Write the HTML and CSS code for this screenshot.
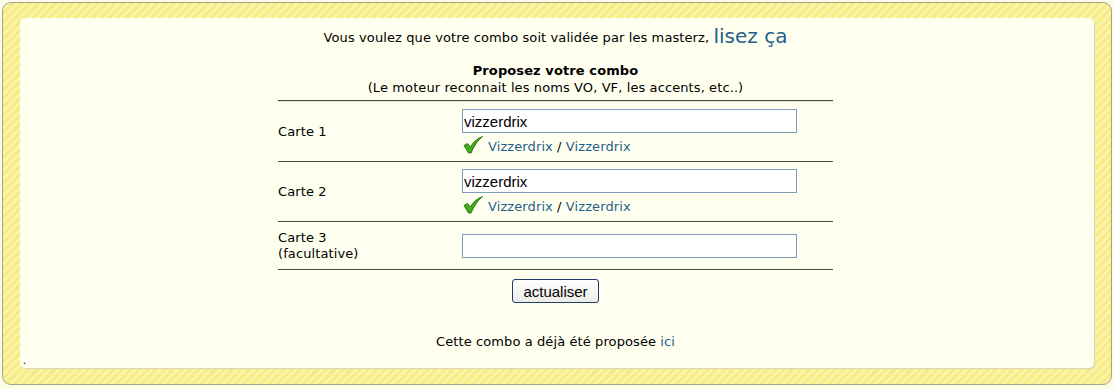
FILE: index.html
```html
<!DOCTYPE html>
<html lang="fr">
<head>
    <meta charset="UTF-8">
    <title>Proposer une combo</title>
    <link rel="stylesheet" href="styles.css">
</head>
<body>
    <div class="frame">
        <div class="box">
            <p class="intro">Vous voulez que votre combo soit validée par les masterz, <a href="#" class="big-link">lisez ça</a></p>

            <div class="form-head">
                <strong>Proposez votre combo</strong><br>
                (Le moteur reconnait les noms VO, VF, les accents, etc..)
            </div>

            <div class="cards">
                <div class="row">
                    <div class="label">Carte 1</div>
                    <div class="field">
                        <input type="text" value="vizzerdrix">
                        <div class="match">
                            <svg class="check" width="20" height="18" viewBox="0 0 20 18"><path d="M1 9.5 L4.5 7.5 L7.5 11 C10 6 14 2.5 19.5 0.5 C14.5 4.5 11 10 8 17 L5.5 17 Z" fill="#3fae18" stroke="#206f0a" stroke-width="0.9"/></svg>
                            <a href="#">Vizzerdrix</a> / <a href="#">Vizzerdrix</a>
                        </div>
                    </div>
                </div>
                <div class="row">
                    <div class="label">Carte 2</div>
                    <div class="field">
                        <input type="text" value="vizzerdrix">
                        <div class="match">
                            <svg class="check" width="20" height="18" viewBox="0 0 20 18"><path d="M1 9.5 L4.5 7.5 L7.5 11 C10 6 14 2.5 19.5 0.5 C14.5 4.5 11 10 8 17 L5.5 17 Z" fill="#3fae18" stroke="#206f0a" stroke-width="0.9"/></svg>
                            <a href="#">Vizzerdrix</a> / <a href="#">Vizzerdrix</a>
                        </div>
                    </div>
                </div>
                <div class="row short">
                    <div class="label">Carte 3<br>(facultative)</div>
                    <div class="field">
                        <input type="text" value="">
                    </div>
                </div>
            </div>

            <div class="actions">
                <button type="button">actualiser</button>
            </div>

            <p class="already">Cette combo a déjà été proposée <a href="#">ici</a></p>
            <div class="dot">.</div>
        </div>
    </div>
</body>
</html>
```

FILE: styles.css
```css
/* Page */
body {
    margin: 0;
    padding: 2px;
    background-color: #fdfce6;
    font-family: "DejaVu Sans", Verdana, sans-serif;
    font-size: 13px;
    letter-spacing: 0.1px;
    color: #000;
}

a {
    color: #1f5f8b;
    text-decoration: none;
}

/* Yellow striped frame */
.frame {
    height: 383px;
    box-sizing: border-box;
    border: 1px solid #a3a28e;
    border-radius: 9px;
    padding: 15px 17px 16px 17px;
    background: repeating-linear-gradient(135deg, #f6ec86 0, #f6ec86 3px, #fbf4a6 3px, #fbf4a6 6px);
}

.box {
    height: 100%;
    box-sizing: border-box;
    background-color: #fffff0;
    border-radius: 5px;
    box-shadow: 1px 1px 1px #d8d6b8;
    padding-top: 1px;
    padding-right: 3px;
    text-align: center;
    position: relative;
}

/* Header texts */
.intro {
    margin: 0;
    height: 34px;
    line-height: 34px;
}

.big-link {
    font-size: 20px;
    letter-spacing: 0;
    vertical-align: -1px;
}

.form-head {
    margin-top: 9px;
    line-height: 17px;
}

/* Card rows */
.cards {
    width: 555px;
    margin: 4px auto 0;
    padding-top: 1px;
    border-top: 1px solid #4a4a4a;
    box-shadow: inset 0 1px 0 #e6e4d0;
    text-align: left;
}

.row {
    display: grid;
    grid-template-columns: 184px 1fr;
    align-items: center;
    height: 60px;
    box-sizing: border-box;
    border-bottom: 1px solid #4a4a4a;
}

.row.short {
    height: 48px;
}

.label {
    line-height: 16px;
}

.field input {
    display: block;
    width: 335px;
    height: 24px;
    box-sizing: border-box;
    margin: 1px 0 0;
    padding: 0 1px;
    border: 1px solid #7f9db9;
    background: #fff;
    font-family: "Liberation Sans", Arial, sans-serif;
    font-size: 15px;
    letter-spacing: 0;
}

.row.short .field input {
    margin-top: 0;
}

.match {
    display: flex;
    align-items: center;
    margin-top: 4px;
    height: 18px;
    white-space: pre;
}

.check {
    margin: -3px 5px 0 1px;
}

/* Button */
.actions {
    margin-top: 9px;
}

button {
    font-family: "Liberation Sans", Arial, sans-serif;
    font-size: 15px;
    letter-spacing: 0;
    padding: 0 10px;
    height: 24px;
    background: linear-gradient(#ffffff, #ecebe6);
    border: 1px solid #1f3d6a;
    border-radius: 3px;
    cursor: pointer;
}

.already {
    margin: 31px 0 0;
}

.dot {
    position: absolute;
    left: 3px;
    bottom: 1px;
    line-height: 12px;
    font-size: 10px;
}
```
